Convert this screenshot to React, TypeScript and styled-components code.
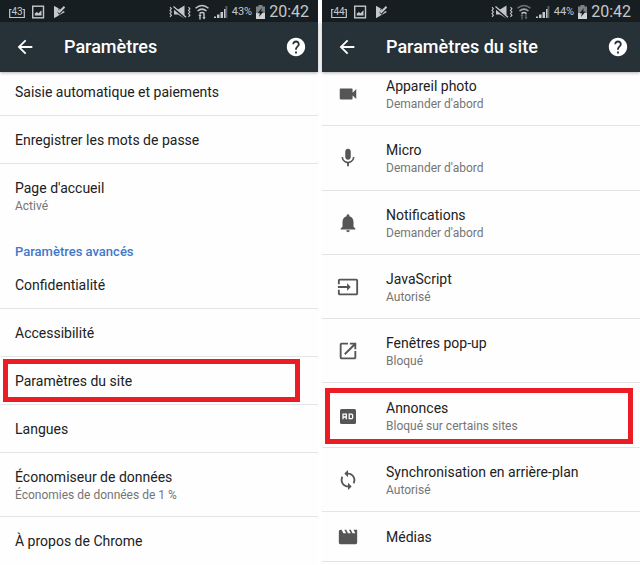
import React from "react";
import styled, { createGlobalStyle } from "styled-components";
import {
  MdArrowBack,
  MdHelp,
  MdInput,
  MdMic,
  MdMovie,
  MdNotifications,
  MdOpenInNew,
  MdSync,
  MdVideocam,
} from "react-icons/md";

const GlobalStyle = createGlobalStyle`
  * { box-sizing: border-box; }
  body {
    margin: 0;
    background: #fff;
    font-family: Roboto, "Liberation Sans", sans-serif;
  }
`;

const Screens = styled.div`
  display: grid;
  grid-template-columns: 1fr 1fr;
  gap: 4px;
  min-height: 100vh;
`;

const Screen = styled.section`
  display: flex;
  flex-direction: column;
  min-width: 0;
  background: #fefefe;
`;

const StatusBar = styled.div`
  display: flex;
  flex: none;
  align-items: center;
  justify-content: space-between;
  height: 22px;
  padding: 2px 9px 0;
  background: #171e22;
  color: #c4c8ca;
`;

const StatusGroup = styled.div<{ $gap: number }>`
  display: flex;
  align-items: center;
  gap: ${(p) => p.$gap}px;
  svg {
    display: block;
  }
`;

const Percent = styled.span`
  font-size: 11px;
  line-height: 14px;
`;

const Clock = styled.time`
  font-size: 16px;
  line-height: 20px;
  color: #c4c8ca;
`;

const AppBar = styled.header`
  position: relative;
  z-index: 1;
  display: flex;
  flex: none;
  align-items: center;
  height: 50px;
  padding: 0 11px 0 14px;
  background: #263238;
  color: #fff;
  box-shadow: 0 1px 3px rgba(0, 0, 0, 0.3);
`;

const IconButton = styled.button`
  display: flex;
  padding: 0;
  border: 0;
  background: none;
  color: inherit;
  cursor: pointer;
`;

const Title = styled.h1`
  flex: 1;
  margin: 0 0 0 28px;
  font-size: 18px;
  line-height: 24px;
  font-weight: 500;
`;

const Viewport = styled.main`
  display: flex;
  flex-direction: column;
  flex: 1;
  overflow: hidden;
`;

const List = styled.ul<{ $scrolled: number; $end?: number }>`
  display: flex;
  flex: 1 0 auto;
  flex-direction: column;
  margin: ${(p) => -p.$scrolled}px 0 ${(p) => p.$end ?? 0}px;
  padding: 0;
  list-style: none;
`;

const Item = styled.li<{ $grow?: boolean; $divider?: boolean }>`
  position: relative;
  display: flex;
  flex: ${(p) => (p.$grow ? 1 : 0)} 0 auto;
  border-bottom: ${(p) => (p.$divider ? 1 : 0)}px solid #e4e4e4;
`;

const Row = styled.button<{ $divider?: boolean }>`
  display: flex;
  flex: 1;
  align-items: center;
  gap: 27px;
  padding: 14px 15px ${(p) => (p.$divider ? 13 : 14)}px;
  border: 0;
  background: none;
  color: #555;
  font-family: inherit;
  text-align: left;
  cursor: pointer;
`;

const Labels = styled.span`
  display: flex;
  flex-direction: column;
`;

const Label = styled.span`
  font-size: 14px;
  line-height: 20px;
  color: #212121;
`;

const Detail = styled.span`
  font-size: 12px;
  line-height: 16px;
  color: #757575;
`;

const SectionTitle = styled.h2`
  margin: 0;
  padding: 14px 15px 0;
  height: 33px;
  font-size: 13px;
  line-height: 20px;
  font-weight: 500;
  color: #4278c8;
`;

const Highlight = styled.span<{ $inset: string }>`
  position: absolute;
  inset: ${(p) => p.$inset};
  border: 5px solid #eb1c24;
  pointer-events: none;
`;

const CounterIcon = ({ value }: { value: number }) => (
  <svg width="16" height="14" viewBox="0 0 16 14" fill="none" stroke="currentColor">
    <path d="M2.500 4.500H.7v8h14.600v-8H13.500" strokeWidth="1.200" />
    <text
      x="8"
      y="9.500"
      textAnchor="middle"
      fontSize="10"
      fill="currentColor"
      stroke="none"
    >
      {value}
    </text>
  </svg>
);

const GalleryIcon = () => (
  <svg width="14" height="14" viewBox="0 0 14 14" fill="none">
    <rect x="1.700" y="1.200" width="10.800" height="11.600" stroke="currentColor" strokeWidth="1.400" />
    <path d="M3.800 10.600V8.400l2-1.400 1.700 1.200 3-3v5.400z" fill="currentColor" />
  </svg>
);

const PlayCheckIcon = () => (
  <svg width="14" height="14" viewBox="0 0 14 14">
    <path d="M3 1L14 7 3 13z" fill="currentColor" />
    <path d="M6.200 5l2.300 2.400L14 2" fill="none" stroke="#171e22" strokeWidth="3.200" />
    <path d="M3 1l3.500 2v7.900L3 13z" fill="currentColor" />
    <path d="M5.800 4.400l2.500 2.600 5.200-5.200" fill="none" stroke="currentColor" strokeWidth="2" />
  </svg>
);

const VibrateMuteIcon = () => (
  <svg width="22" height="14" viewBox="0 0 22 14" fill="none" stroke="currentColor">
    <path
      d="M1 2.200l1.400 1.600L1 5.400 2.400 7 1 8.600l1.400 1.600L1 11.800M19.500 2.200l1.400 1.600-1.400 1.600L20.900 7l-1.400 1.600 1.400 1.600-1.400 1.600"
      strokeWidth="1.100"
    />
    <path d="M5 4.500h4l6.500-4v13L9 9.500H5z" fill="currentColor" stroke="none" />
    <path d="M4.500 2.800l12.500 10.500" stroke="#171e22" strokeWidth="2.400" />
    <path d="M4.500 1.500l12.500 10.800" strokeWidth="1.300" />
  </svg>
);

const WifiIcon = ({ active }: { active: boolean }) => (
  <svg width="16" height="16" viewBox="0 0 16 16" fill="none" stroke="currentColor">
    <g strokeWidth="1.500">
      <path d="M1.500 4.300q6.500-5.600 13 0" opacity={active ? 1 : 0.5} />
      <path d="M3.500 7q4.500-3.800 9 0" opacity={active ? 1 : 0.8} />
      <path d="M5.500 9.600q2.500-2.200 5 0" />
    </g>
    <g opacity={active ? 1 : 0.4} fill="currentColor" stroke="none">
      <path d="M6 9.800l1.700 2.200h-1v3.500H5.300V12h-1z" />
      <path d="M10 15.500L8.300 13.300h1V9.800h1.400v3.500h1z" />
    </g>
  </svg>
);

const SignalIcon = () => (
  <svg width="16" height="14" viewBox="0 0 16 14" fill="currentColor">
    <path d="M1 11.500h2V13H1zM4 9.500h2.500V13H4zM7.500 7H10v6H7.500zM11 4h1.500v9H11z" />
    <path d="M12.500 1h1.800v12h-1.800z" opacity="0.400" />
  </svg>
);

const BatteryIcon = () => (
  <svg width="11" height="14" viewBox="0 0 11 14">
    <path d="M3.500 0h4v1.500H10V14H1V1.500h2.500z" fill="#7b8184" />
    <path d="M1 8h9v6H1z" fill="#d0d3d5" />
    <path d="M6.800 3L2.600 8.300h2.300L4 12l4.600-5.400H6.200z" fill="#171e22" />
  </svg>
);

const AdIcon = () => (
  <svg width="22" height="22" viewBox="0 0 22 22">
    <rect x="3" y="4" width="16" height="15" rx="1.500" fill="currentColor" />
    <g fill="none" stroke="#fff" strokeWidth="1.300">
      <path d="M6 14.200V9.200h3.300v5M6 12h3.300" />
      <path d="M12.200 9.200h2.600l.8.800v2.900l-.8.800h-2.600z" />
    </g>
  </svg>
);

type Entry = {
  label: string;
  detail?: string;
  icon?: React.ReactNode;
  divider?: boolean;
  highlight?: string;
};

const SettingRow = ({
  label,
  detail,
  icon,
  divider = true,
  highlight,
  grow,
}: Entry & { grow?: boolean }) => (
  <Item $divider={divider} $grow={grow && !!detail}>
    <Row type="button" $divider={divider}>
      {icon}
      <Labels>
        <Label>{label}</Label>
        {detail && <Detail>{detail}</Detail>}
      </Labels>
    </Row>
    {highlight && <Highlight $inset={highlight} />}
  </Item>
);

const TopBars = ({
  title,
  battery,
  wifiActive,
}: {
  title: string;
  battery: number;
  wifiActive: boolean;
}) => (
  <>
    <StatusBar>
      <StatusGroup $gap={6}>
        <CounterIcon value={battery} />
        <GalleryIcon />
        <PlayCheckIcon />
      </StatusGroup>
      <StatusGroup $gap={3}>
        <VibrateMuteIcon />
        <WifiIcon active={wifiActive} />
        <SignalIcon />
        <Percent>{battery}%</Percent>
        <BatteryIcon />
        <Clock>20:42</Clock>
      </StatusGroup>
    </StatusBar>
    <AppBar>
      <IconButton type="button" aria-label="Retour">
        <MdArrowBack size={22} />
      </IconButton>
      <Title>{title}</Title>
      <IconButton type="button" aria-label="Aide">
        <MdHelp size={22} />
      </IconButton>
    </AppBar>
  </>
);

const basics: Entry[] = [
  { label: "Saisie automatique et paiements" },
  { label: "Enregistrer les mots de passe" },
  { label: "Page d'accueil", detail: "Activé", divider: false },
];

const advanced: Entry[] = [
  { label: "Confidentialité" },
  { label: "Accessibilité" },
  { label: "Paramètres du site", highlight: "2px 18px 2px 3px" },
  { label: "Langues" },
  { label: "Économiseur de données", detail: "Économies de données de 1 %" },
  { label: "À propos de Chrome", divider: false },
];

const permissions: Entry[] = [
  { label: "Appareil photo", detail: "Demander d'abord", icon: <MdVideocam size={22} /> },
  { label: "Micro", detail: "Demander d'abord", icon: <MdMic size={22} /> },
  { label: "Notifications", detail: "Demander d'abord", icon: <MdNotifications size={22} /> },
  { label: "JavaScript", detail: "Autorisé", icon: <MdInput size={22} /> },
  { label: "Fenêtres pop-up", detail: "Bloqué", icon: <MdOpenInNew size={22} /> },
  {
    label: "Annonces",
    detail: "Bloqué sur certains sites",
    icon: <AdIcon />,
    highlight: "5px 7px 3px 3px",
  },
  { label: "Synchronisation en arrière-plan", detail: "Autorisé", icon: <MdSync size={22} /> },
  { label: "Médias", icon: <MdMovie size={22} /> },
];

export default function App() {
  return (
    <>
      <GlobalStyle />
      <Screens>
        <Screen>
          <TopBars title="Paramètres" battery={43} wifiActive />
          <Viewport>
            <List $scrolled={4}>
              {basics.map((entry) => (
                <SettingRow key={entry.label} {...entry} />
              ))}
              <li>
                <SectionTitle>Paramètres avancés</SectionTitle>
              </li>
              {advanced.map((entry) => (
                <SettingRow key={entry.label} {...entry} />
              ))}
            </List>
          </Viewport>
        </Screen>
        <Screen>
          <TopBars title="Paramètres du site" battery={44} wifiActive={false} />
          <Viewport>
            <List $scrolled={10} $end={3}>
              {permissions.map((entry) => (
                <SettingRow key={entry.label} {...entry} grow />
              ))}
            </List>
          </Viewport>
        </Screen>
      </Screens>
    </>
  );
}
